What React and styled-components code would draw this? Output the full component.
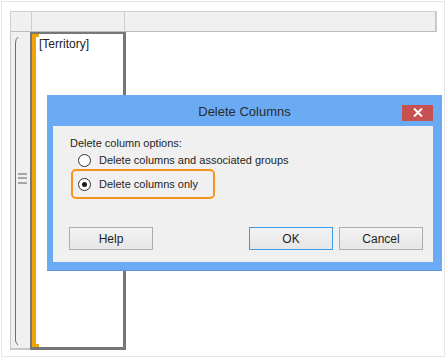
import React from "react";
import styled, { createGlobalStyle } from "styled-components";

const GlobalStyle = createGlobalStyle`
  html, body {
    margin: 0;
    padding: 0;
    background: #ffffff;
  }
  body {
    font-family: "Liberation Sans", Arial, sans-serif;
    color: #1e1e1e;
  }
`;

function App() {
  return (
    <>
      <GlobalStyle />
      <Frame>
        <HeaderRow>
          <HeaderCell width="21px" />
          <HeaderCell width="93px" />
          <HeaderCell grow />
        </HeaderRow>
        <BodyRow>
          <RowHandle>
            <svg width="20" height="318" viewBox="0 0 20 318">
              <path
                d="M8 5 Q5.5 7 5.5 11 L5.5 308 Q5.5 311 8 313"
                fill="none"
                stroke="#6e6e6e"
                strokeWidth="1"
              />
              <rect x="8" y="141" width="9" height="2" fill="#a6a6a6" />
              <rect x="8" y="145" width="9" height="2" fill="#a6a6a6" />
              <rect x="8" y="150" width="9" height="2" fill="#a6a6a6" />
            </svg>
          </RowHandle>
          <SelectedCell>
            <CellText>[Territory]</CellText>
          </SelectedCell>
        </BodyRow>

        <Dialog>
          <TitleBar>
            <span />
            <Title>Delete Columns</Title>
            <CloseButton>
              <svg width="10" height="9" viewBox="0 0 10 9">
                <path d="M1 0.5 L9 8.5 M9 0.5 L1 8.5" stroke="#ffffff" strokeWidth="2" />
              </svg>
            </CloseButton>
          </TitleBar>
          <DialogBody>
            <GroupLabel>Delete column options:</GroupLabel>
            <Options>
              <Option>
                <Radio />
                Delete columns and associated groups
              </Option>
              <Highlight>
                <Option>
                  <Radio checked />
                  Delete columns only
                </Option>
              </Highlight>
            </Options>
            <Buttons>
              <Button>Help</Button>
              <Spacer />
              <Button primary>OK</Button>
              <Button>Cancel</Button>
            </Buttons>
          </DialogBody>
        </Dialog>
      </Frame>
    </>
  );
}

const Frame = styled.div`
  position: relative;
  margin: 1px 0 0 1px;
  width: 444px;
  height: 356px;
  box-sizing: border-box;
  border: 1px solid #e6e6e6;
  padding: 9px 7px 5px 8px;
  display: flex;
  flex-direction: column;
`;

const HeaderRow = styled.div`
  display: flex;
  height: 21px;
  box-sizing: border-box;
  border: 1px solid #cfcfcf;
  border-bottom-color: #bdbdbd;
  background: #f0f0f0;
`;

const HeaderCell = styled.div`
  width: ${(p) => p.width || "auto"};
  flex: ${(p) => (p.grow ? "1" : "none")};
  box-sizing: border-box;
  border-right: 1px solid #cdcdcd;
  &:last-child {
    border-right: 1px solid #c4c4c4;
  }
`;

const BodyRow = styled.div`
  display: flex;
  height: 318px;
`;

const RowHandle = styled.div`
  width: 20px;
  box-sizing: border-box;
  background: #f0f0f0;
  border-left: 1px solid #c8c8c8;
  border-bottom: 2px solid #c8c8c8;
  display: flex;
  svg {
    display: block;
    margin-left: -1px;
  }
`;

const SelectedCell = styled.div`
  position: relative;
  width: 96px;
  box-sizing: border-box;
  border: 3px solid #777777;
  border-left-width: 2px;
  border-top-width: 2px;
  &::before,
  &::after {
    content: "";
    position: absolute;
    left: 0;
    width: 7px;
    height: 3px;
    background: #f0a30a;
  }
  &::before {
    top: 0;
  }
  &::after {
    bottom: 0;
  }
`;

const CellText = styled.div`
  height: 100%;
  box-sizing: border-box;
  border-left: 4px solid #f0a30a;
  padding: 3px 0 0 3px;
  font-size: 12px;
  color: #222;
`;

const Dialog = styled.div`
  position: absolute;
  left: 45px;
  top: 93px;
  width: 395px;
  height: 175px;
  box-sizing: border-box;
  background: #6aabf4;
  padding: 0 9px 8px 6px;
  display: flex;
  flex-direction: column;
  box-shadow: 0 1px 0 #5a93d6;
`;

const TitleBar = styled.div`
  height: 31px;
  margin: 0 -9px 0 -6px;
  padding: 0 9px;
  display: grid;
  grid-template-columns: 1fr auto 1fr;
  align-items: center;
`;

const Title = styled.div`
  font-size: 13px;
  color: #2b2b2b;
  padding-top: 1px;
`;

const CloseButton = styled.div`
  justify-self: end;
  width: 31px;
  height: 16px;
  margin-top: 4px;
  background: #c75050;
  display: flex;
  align-items: center;
  justify-content: center;
  svg {
    display: block;
  }
`;

const DialogBody = styled.div`
  flex: 1;
  background: #f0f0f0;
  padding: 10px 10px 0 17px;
  display: flex;
  flex-direction: column;
  font-size: 11px;
  color: #1e1e1e;
`;

const GroupLabel = styled.div`
  height: 14px;
  line-height: 14px;
`;

const Options = styled.div`
  display: flex;
  flex-direction: column;
`;

const Option = styled.div`
  display: flex;
  align-items: center;
  gap: 8px;
  height: 20px;
  padding-left: 8px;
`;

const Highlight = styled.div`
  width: 144px;
  height: 30px;
  box-sizing: border-box;
  margin-left: 1px;
  margin-top: -1px;
  border: 2px solid #f7941d;
  border-radius: 5px;
  display: flex;
  align-items: center;
  ${Option} {
    padding-left: 5px;
  }
`;

const Radio = styled.span`
  position: relative;
  width: 13px;
  height: 13px;
  box-sizing: border-box;
  border-radius: 50%;
  border: 1px solid #333333;
  background: #ffffff;
  flex: none;
  &::after {
    content: "";
    display: ${(p) => (p.checked ? "block" : "none")};
    position: absolute;
    left: 3px;
    top: 3px;
    width: 5px;
    height: 5px;
    border-radius: 50%;
    background: #1a1a1a;
  }
`;

const Buttons = styled.div`
  display: flex;
  gap: 6px;
  margin-top: 28px;
  margin-left: -1px;
`;

const Spacer = styled.div`
  flex: 1;
`;

const Button = styled.div`
  width: 84px;
  height: 23px;
  box-sizing: border-box;
  border: 1px solid ${(p) => (p.primary ? "#3c9ae6" : "#adadad")};
  background: linear-gradient(#f2f2f2, #e6e6e6);
  display: flex;
  align-items: center;
  justify-content: center;
  font-size: 12px;
  color: #1e1e1e;
`;

export default App;
